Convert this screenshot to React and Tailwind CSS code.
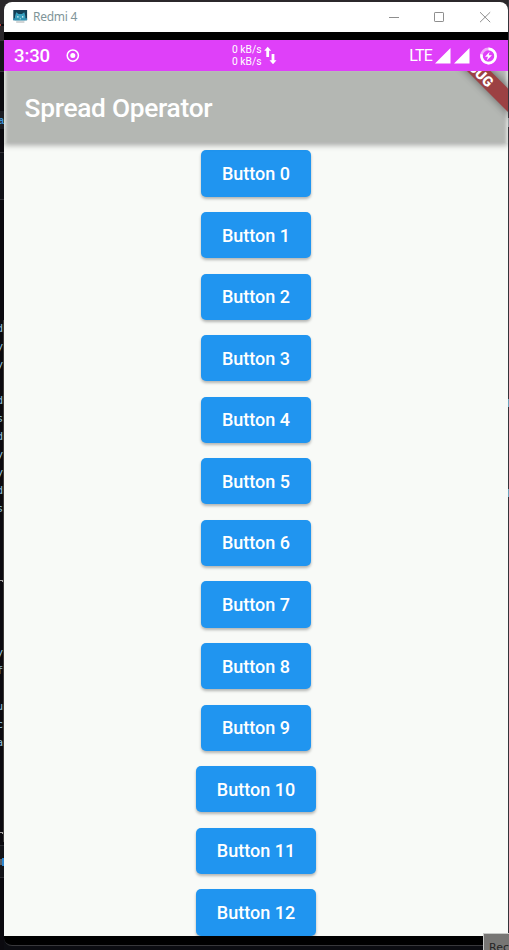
import React from 'react';

const buttons = Array.from({ length: 13 }, (_, i) => i);

// Last letter of each editor line that sticks out beside the emulator window
const codeTails = [
  'd', 'y', 'y', '', 'd', 's', 'd', 'y', 'y', 'd', 's', '', '', '', '-',
  '', '', '', 'y', 'f', '', 'u', 'c', 'a', '', '', '', '', '-',
];

function EditorSliver() {
  return (
    <div className="flex h-[950px] w-[4px] shrink-0 flex-col overflow-hidden bg-[#0b0a0f]">
      <div className="h-[24px] shrink-0 bg-[#2b282b]" />
      <div className="h-[2px] w-[1px] shrink-0 bg-[#b5433f]" />
      <div className="h-[14px] shrink-0 bg-[#2b282b]" />
      <div className="h-[32px] shrink-0 border-y border-[#343236] bg-[#151418]" />
      <div className="mt-[39px] flex h-[18px] shrink-0 items-center justify-end bg-[#1b1c22] font-['Liberation_Sans',sans-serif] text-[10px] font-bold text-[#3f92d8]">la</div>
      <div className="mt-[23px] h-[48px] shrink-0 border-y border-[#303036] bg-[#111218]" />
      <div className="mt-[120px] flex shrink-0 flex-col border-r border-[#3a3836]">
        {codeTails.map((t, i) => (
          <div key={i} className="flex h-[18px] items-center justify-end overflow-hidden font-['DejaVu_Sans_Mono',monospace] text-[11px] leading-[18px] text-[#8fc0de]">
            {t === '-' ? <span className="h-[2px] w-[3px] border-r border-t border-[#a3a09f]" /> : t}
          </div>
        ))}
      </div>
      <div className="mt-[3px] flex h-[33px] shrink-0 items-center border-y border-[#2b2c32] bg-[#131419]">
        <span className="h-[6px] w-[2px] bg-[#59606a]" />
        <span className="h-[8px] w-[2px] bg-[#2b85ce]" />
      </div>
    </div>
  );
}

function EmulatorIcon() {
  return (
    <svg width="15" height="14" viewBox="0 0 15 14">
      <rect x="0.3" y="0" width="13.8" height="10.2" fill="#133f57" />
      <path d="M2 10.2V6.2L3.2 2.3 5.6 4h3.3l2.4-1.7 1.1 3.9v4z" fill="#39a0bf" />
      <path d="M0.3 8.2h13.8v2H0.3z" fill="#2f91b2" />
      <path d="M4.2 6.2h1.3v1.4H4.2zM9 6.2h1.3v1.4H9zM6.7 8.4h1.2v.9H6.7z" fill="#f2fbff" />
      <path d="M3.2 11h8.2v2H3.2z" fill="#d2d5d6" />
    </svg>
  );
}

function TitleBar() {
  return (
    <div className="flex h-[30px] shrink-0 items-center bg-white pl-[9px]">
      <EmulatorIcon />
      <span className="ml-[5px] font-['Noto_Sans','Open_Sans',sans-serif] text-[12px] leading-[16px] tracking-[-0.25px] text-[#7f9599]">Redmi 4</span>
      <svg className="ml-auto mr-[16px]" width="104" height="14" viewBox="0 0 104 14" fill="none" stroke="#8e8e8e">
        <path d="M1 7.5h10" />
        <rect x="46.5" y="2.5" width="9" height="9" rx="0.6" />
        <path d="M92 2.2l10.2 10M102.2 2.2l-10.2 10" />
      </svg>
    </div>
  );
}

function StatusBar() {
  return (
    <div className="flex h-[31px] shrink-0 items-center bg-[#df40f9] font-['Roboto',sans-serif] text-white">
      <span className="ml-[10px] w-[52px] pt-[1px] text-[18.6px] font-medium leading-[31px] tracking-[-0.15px]">3:30</span>
      <svg width="14" height="14" viewBox="0 0 14 14">
        <circle cx="6.8" cy="6.6" r="5.6" fill="none" stroke="white" strokeWidth="1.5" />
        <circle cx="6.8" cy="6.6" r="2.5" fill="white" />
      </svg>
      <div className="ml-[152px] w-[32px] whitespace-nowrap text-[10.3px] leading-[12px]">
        <div>0 kB/s</div>
        <div>0 kB/s</div>
      </div>
      <svg width="13" height="19" viewBox="0 0 13 19" fill="white">
        <path d="M3.7.8L7.2 4.7H5.1V11H2.3V4.7H.2zM9 18.2L5.5 14.3h2.1V8h2.8v6.3h2.1z" />
      </svg>
      <span className="ml-auto text-[16px] leading-[31px] tracking-[-0.8px]">LTE</span>
      <svg className="ml-[3px]" width="64" height="18" viewBox="0 0 64 18">
        <path d="M0 16.5L15.5 1v15.5zM19 16.5L34.5 1v15.5z" fill="white" />
        <circle cx="53.5" cy="9" r="7.1" fill="none" stroke="#f2a6fb" strokeWidth="2.6" />
        <path d="M53.5 1.9A7.1 7.1 0 1 1 46.6 7.4" fill="none" stroke="white" strokeWidth="2.6" />
        <path d="M54.7 4.7L50 9.7h3l-1.3 3.8L57 8.3h-3.3z" fill="white" />
      </svg>
      <span className="w-[9px]" />
    </div>
  );
}

function AppBar() {
  return (
    <div className="relative h-[72px] shrink-0 bg-[#b4b7b3] shadow-[0_2px_6px_rgba(0,0,0,0.35),inset_4px_0_3px_-2px_rgba(232,235,232,0.8),inset_-4px_0_3px_-2px_rgba(232,235,232,0.8)]">
      <h1 className="pl-[20.5px] font-['Roboto',sans-serif] text-[26.3px] font-medium leading-[74px] tracking-[-0.28px] text-white">Spread Operator</h1>
      <svg className="absolute right-0 top-0" width="100" height="72" viewBox="0 0 100 72">
        <defs>
          <filter id="ribbonShadow" x="-30%" y="-30%" width="160%" height="160%">
            <feGaussianBlur stdDeviation="4" />
          </filter>
        </defs>
        <path d="M39-20L120 61V36L63-20z" fill="#000" opacity="0.45" filter="url(#ribbonShadow)" />
        <path d="M39-20L120 61V37.5L62.5-20z" fill="#9c4143" />
        <text transform="translate(59.6 -2.9) rotate(45)" fontFamily="Roboto, sans-serif" fontSize="14.2" fontWeight="900" fill="white">BUG</text>
      </svg>
    </div>
  );
}

export default function App() {
  return (
    <div className="relative flex h-[950px] w-[509px] overflow-hidden bg-[#0c0d12]">
      <EditorSliver />
      <div className="flex w-[504px] shrink-0 flex-col border-t-2 border-[#2b282b] bg-[linear-gradient(#2b282b_30px,#0c0d12_30px)]">
        <div className="flex h-[944px] shrink-0 flex-col overflow-hidden rounded-[8px] border-b border-[#38383b] bg-black">
          <TitleBar />
          <div className="h-[8px] shrink-0 bg-black" />
          <StatusBar />
          <div className="flex h-[865px] shrink-0 flex-col overflow-hidden bg-[#f8faf7]">
            <AppBar />
            <div className="flex flex-col items-center gap-[15.4px] pt-[7.4px]">
              {buttons.map((n) => (
                <button
                  key={n}
                  className="h-[46.2px] shrink-0 rounded-[5px] bg-[#2095f0] px-[20.7px] font-['Roboto',sans-serif] text-[18px] font-medium text-white shadow-[0_2px_3px_rgba(0,0,0,0.28)]"
                >
                  Button {n}
                </button>
              ))}
            </div>
          </div>
        </div>
      </div>
      <div className="flex w-px shrink-0 flex-col bg-[#34343b]">
        <span className="mt-[118px] h-[9px] bg-[#8b9499]" />
        <span className="mt-[272px] h-[8px] bg-[#6ba3bd]" />
        <span className="mt-[82px] h-[8px] bg-[#6ba3bd]" />
      </div>
      <div className="absolute bottom-0 right-0 h-[17px] w-[26px] overflow-hidden whitespace-nowrap border-l border-t border-[#c8cac8] bg-[#777674] pl-[5px] font-['DejaVu_Sans',sans-serif] text-[11px] leading-[27px] text-[#242424]">Reco</div>
    </div>
  );
}
